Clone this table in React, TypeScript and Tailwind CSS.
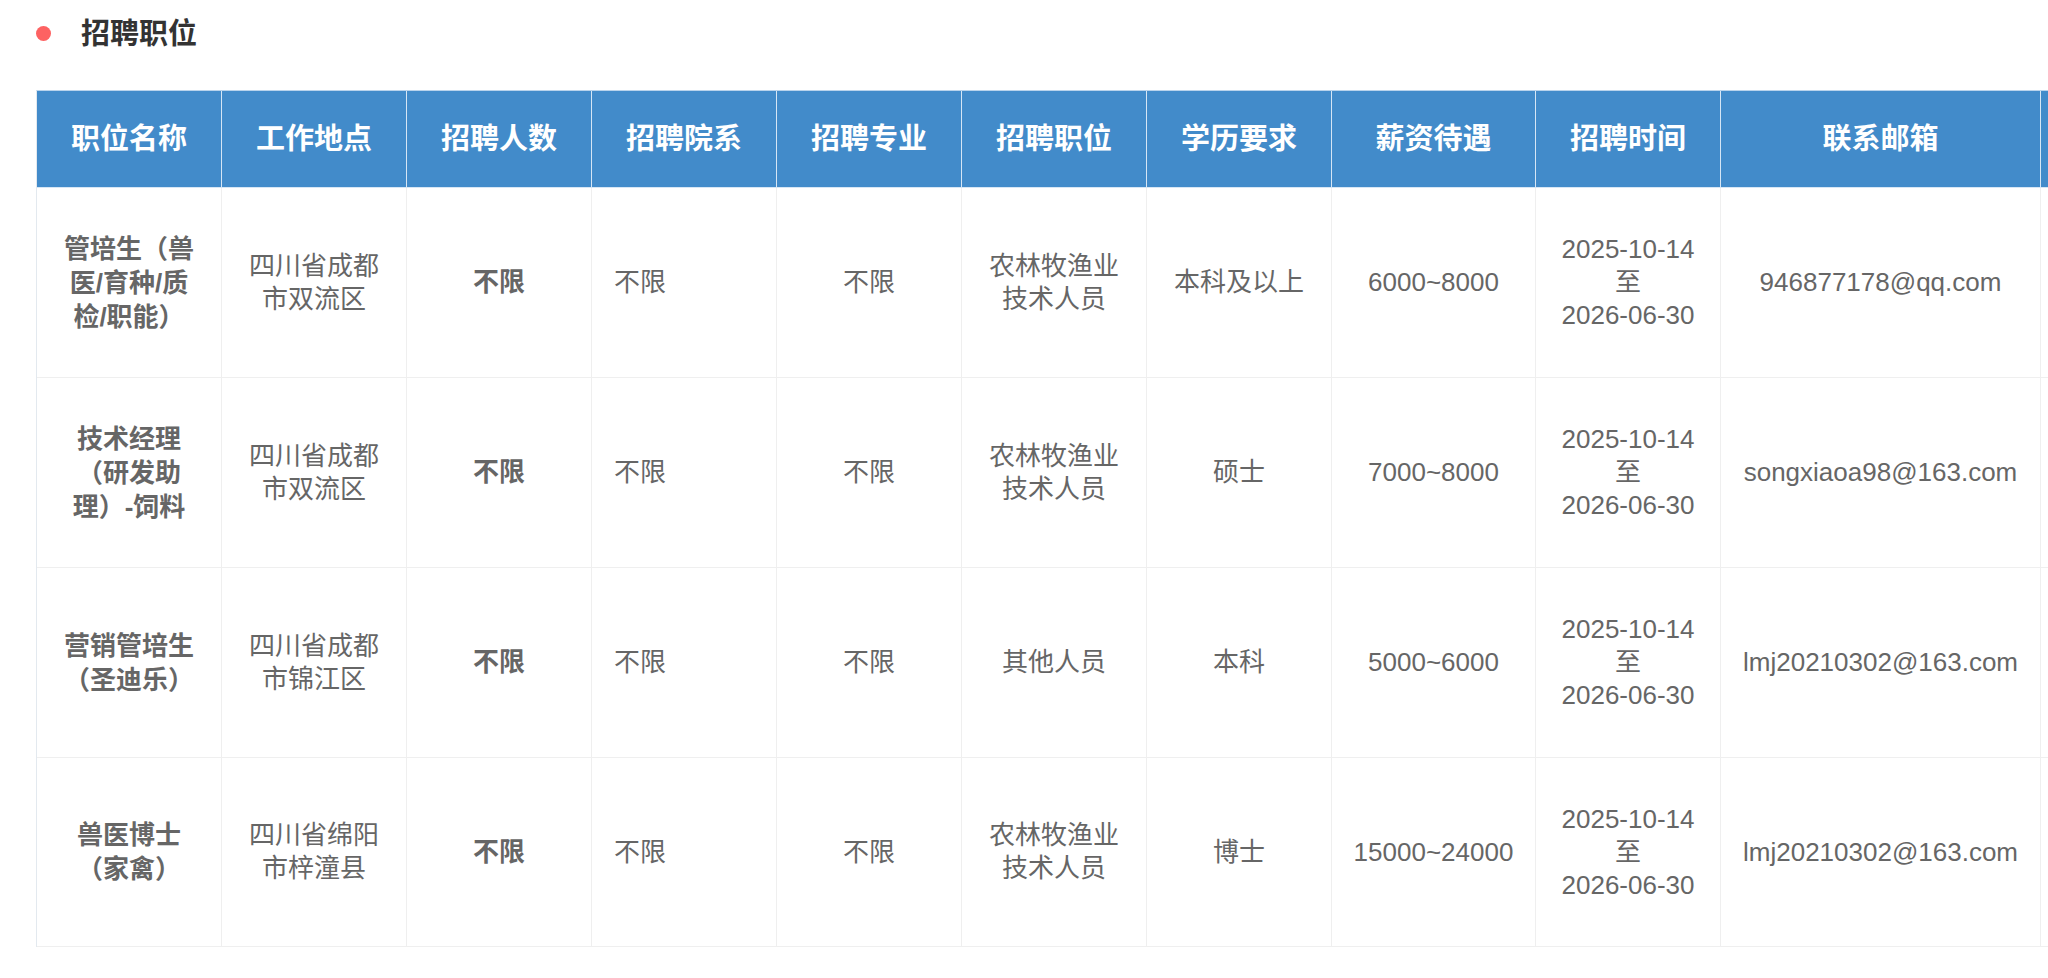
import React from "react";

type Row = {
  name: string;
  loc: string;
  pos: string;
  edu: string;
  pay: string;
  email: string;
  h: string;
};

const rows: Row[] = [
  {
    name: "管培生（兽医/育种/质检/职能）",
    loc: "四川省成都市双流区",
    pos: "农林牧渔业技术人员",
    edu: "本科及以上",
    pay: "6000~8000",
    email: "946877178@qq.com",
    h: "h-[190px]",
  },
  {
    name: "技术经理（研发助理）-饲料",
    loc: "四川省成都市双流区",
    pos: "农林牧渔业技术人员",
    edu: "硕士",
    pay: "7000~8000",
    email: "songxiaoa98@163.com",
    h: "h-[190px]",
  },
  {
    name: "营销管培生（圣迪乐）",
    loc: "四川省成都市锦江区",
    pos: "其他人员",
    edu: "本科",
    pay: "5000~6000",
    email: "lmj20210302@163.com",
    h: "h-[190px]",
  },
  {
    name: "兽医博士（家禽）",
    loc: "四川省绵阳市梓潼县",
    pos: "农林牧渔业技术人员",
    edu: "博士",
    pay: "15000~24000",
    email: "lmj20210302@163.com",
    h: "h-[189px]",
  },
];

const headers = [
  "职位名称",
  "工作地点",
  "招聘人数",
  "招聘院系",
  "招聘专业",
  "招聘职位",
  "学历要求",
  "薪资待遇",
  "招聘时间",
  "联系邮箱",
  "",
];

const font = "font-['Liberation_Sans','Noto_Sans_CJK_SC',sans-serif]";

function Cell({
  children,
  h,
  className = "",
}: {
  children?: React.ReactNode;
  h: string;
  className?: string;
}) {
  return (
    <div
      className={`${h} border-r border-b border-[#efefef] flex items-center justify-center text-center px-[22px] text-[26px] leading-[33px] text-[#666666] ${className}`}
    >
      {children}
    </div>
  );
}

export default function App() {
  return (
    <div className={`w-full overflow-hidden bg-white ${font}`}>
      <div className="pt-[14px] pl-[36px] h-[54px] flex items-start">
        <div className="h-[40px] flex items-center">
          <span className="w-[15px] h-[15px] rounded-full bg-[#fd6262] -mt-[2px]" />
          <span className="ml-[30px] text-[29px] font-bold text-[#333333] leading-[40px]">
            招聘职位
          </span>
        </div>
      </div>
      <div className="mt-[36px] ml-[36px] w-max grid grid-cols-[185px_185px_185px_185px_185px_185px_185px_204px_185px_320px_200px] border-l border-l-[#e3e9ef] border-t border-t-[#b9d3ec]">
        {headers.map((t, i) => (
          <div
            key={i}
            className="h-[97px] bg-[#428bca] border-r border-b border-[#d6e6f5] flex items-center justify-center text-white text-[29px] font-bold leading-[40px]"
          >
            {t}
          </div>
        ))}
        {rows.map((r, i) => (
          <React.Fragment key={i}>
            <Cell h={r.h} className="font-bold leading-[34px]">
              {r.name}
            </Cell>
            <Cell h={r.h}>{r.loc}</Cell>
            <Cell h={r.h} className="font-bold">
              不限
            </Cell>
            <Cell h={r.h} className="justify-start text-left">
              不限
            </Cell>
            <Cell h={r.h}>不限</Cell>
            <Cell h={r.h}>{r.pos}</Cell>
            <Cell h={r.h}>{r.edu}</Cell>
            <Cell h={r.h} className="whitespace-nowrap px-[10px]">
              {r.pay}
            </Cell>
            <Cell h={r.h} className="flex-col whitespace-nowrap leading-[32.5px]">
              <span>2025-10-14</span>
              <span>至</span>
              <span>2026-06-30</span>
            </Cell>
            <Cell h={r.h} className="whitespace-nowrap px-[10px]">
              {r.email}
            </Cell>
            <Cell h={r.h} />
          </React.Fragment>
        ))}
      </div>
    </div>
  );
}
